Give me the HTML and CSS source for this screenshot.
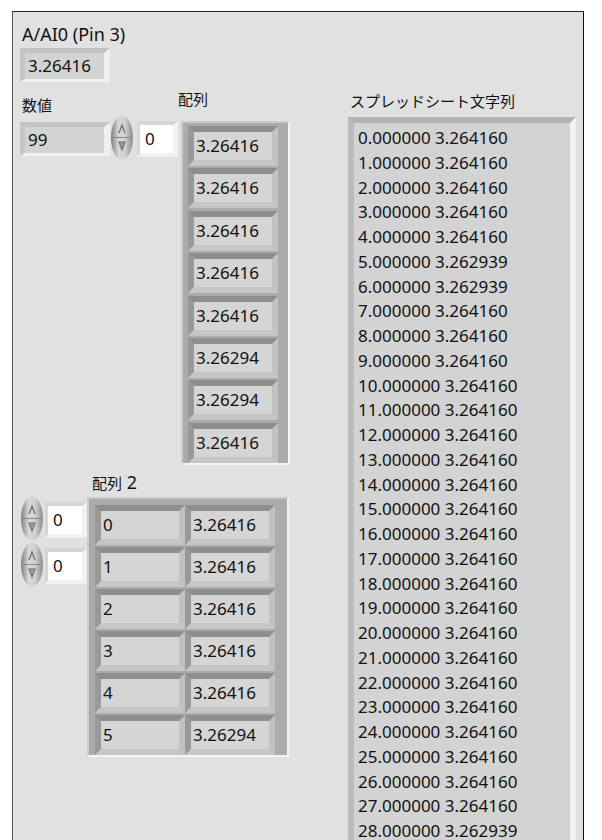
FILE: index.html
```html
<!DOCTYPE html>
<html>
<head>
<meta charset="utf-8">
<link rel="stylesheet" href="styles.css">
</head>
<body>
<div class="panel">
  <div class="ctl ai0">
    <div class="lbl">A/AI0 (Pin 3)</div>
    <div class="num">3.26416</div>
  </div>

  <div class="ctl numv">
    <div class="lbl"><span class="cj">数値</span></div>
    <div class="num">99</div>
  </div>

  <div class="ctl arr1">
    <div class="lbl arr1-lbl"><span class="cj">配列</span></div>
    <div class="arr-body">
      <div class="idx-col">
        <div class="idx-row">
          <svg class="spin" width="24" height="45" viewBox="0 0 24 45"><defs><linearGradient id="sg" x1="0" x2="1" y1="0" y2="0"><stop offset="0" stop-color="#7f7f7f"/><stop offset="0.35" stop-color="#d9d9d9"/><stop offset="0.65" stop-color="#cfcfcf"/><stop offset="1" stop-color="#8c8c8c"/></linearGradient></defs><ellipse cx="12" cy="22.5" rx="11" ry="22" fill="url(#sg)"/><line x1="3" y1="22.5" x2="21" y2="22.5" stroke="#8a8a8a" stroke-width="1"/><path d="M9 18 L12 10 L15 18" fill="none" stroke="#6f6f6f" stroke-width="1.3"/><path d="M9 27 L12 35 L15 27 Z" fill="#a0a0a0" stroke="#6f6f6f" stroke-width="1.1"/></svg>
          <div class="idx">0</div>
        </div>
      </div>
      <div class="frame f1">
        <div class="cell">3.26416</div>
        <div class="cell">3.26416</div>
        <div class="cell">3.26416</div>
        <div class="cell">3.26416</div>
        <div class="cell">3.26416</div>
        <div class="cell">3.26294</div>
        <div class="cell">3.26294</div>
        <div class="cell">3.26416</div>
      </div>
    </div>
  </div>

  <div class="ctl arr2">
    <div class="lbl arr2-lbl"><span class="cj">配列</span> 2</div>
    <div class="arr-body">
      <div class="idx-col">
        <div class="idx-row">
          <svg class="spin" width="24" height="45" viewBox="0 0 24 45"><defs><linearGradient id="sg2" x1="0" x2="1" y1="0" y2="0"><stop offset="0" stop-color="#7f7f7f"/><stop offset="0.35" stop-color="#d9d9d9"/><stop offset="0.65" stop-color="#cfcfcf"/><stop offset="1" stop-color="#8c8c8c"/></linearGradient></defs><ellipse cx="12" cy="22.5" rx="11" ry="22" fill="url(#sg2)"/><line x1="3" y1="22.5" x2="21" y2="22.5" stroke="#8a8a8a" stroke-width="1"/><path d="M9 18 L12 10 L15 18" fill="none" stroke="#6f6f6f" stroke-width="1.3"/><path d="M9 27 L12 35 L15 27 Z" fill="#a0a0a0" stroke="#6f6f6f" stroke-width="1.1"/></svg>
          <div class="idx">0</div>
        </div>
        <div class="idx-row">
          <svg class="spin" width="24" height="45" viewBox="0 0 24 45"><defs><linearGradient id="sg3" x1="0" x2="1" y1="0" y2="0"><stop offset="0" stop-color="#7f7f7f"/><stop offset="0.35" stop-color="#d9d9d9"/><stop offset="0.65" stop-color="#cfcfcf"/><stop offset="1" stop-color="#8c8c8c"/></linearGradient></defs><ellipse cx="12" cy="22.5" rx="11" ry="22" fill="url(#sg3)"/><line x1="3" y1="22.5" x2="21" y2="22.5" stroke="#8a8a8a" stroke-width="1"/><path d="M9 18 L12 10 L15 18" fill="none" stroke="#6f6f6f" stroke-width="1.3"/><path d="M9 27 L12 35 L15 27 Z" fill="#a0a0a0" stroke="#6f6f6f" stroke-width="1.1"/></svg>
          <div class="idx">0</div>
        </div>
      </div>
      <div class="frame f2">
        <div class="cell">0</div><div class="cell">3.26416</div>
        <div class="cell">1</div><div class="cell">3.26416</div>
        <div class="cell">2</div><div class="cell">3.26416</div>
        <div class="cell">3</div><div class="cell">3.26416</div>
        <div class="cell">4</div><div class="cell">3.26416</div>
        <div class="cell">5</div><div class="cell">3.26294</div>
      </div>
    </div>
  </div>

  <div class="ctl str">
    <div class="lbl"><span class="cj">スプレッドシート文字列</span></div>
    <div class="strbox">
      <div>0.000000 3.264160</div>
      <div>1.000000 3.264160</div>
      <div>2.000000 3.264160</div>
      <div>3.000000 3.264160</div>
      <div>4.000000 3.264160</div>
      <div>5.000000 3.262939</div>
      <div>6.000000 3.262939</div>
      <div>7.000000 3.264160</div>
      <div>8.000000 3.264160</div>
      <div>9.000000 3.264160</div>
      <div>10.000000 3.264160</div>
      <div>11.000000 3.264160</div>
      <div>12.000000 3.264160</div>
      <div>13.000000 3.264160</div>
      <div>14.000000 3.264160</div>
      <div>15.000000 3.264160</div>
      <div>16.000000 3.264160</div>
      <div>17.000000 3.264160</div>
      <div>18.000000 3.264160</div>
      <div>19.000000 3.264160</div>
      <div>20.000000 3.264160</div>
      <div>21.000000 3.264160</div>
      <div>22.000000 3.264160</div>
      <div>23.000000 3.264160</div>
      <div>24.000000 3.264160</div>
      <div>25.000000 3.264160</div>
      <div>26.000000 3.264160</div>
      <div>27.000000 3.264160</div>
      <div>28.000000 3.262939</div>
    </div>
  </div>
</div>
</body>
</html>
```

FILE: styles.css
```css
html, body {
  margin: 0;
  padding: 0;
  background: #ffffff;
  overflow: hidden;
  height: 840px;
}
body {
  font-family: "Noto Sans", "Noto Sans CJK JP", sans-serif;
  font-size: 17px;
  color: #111;
}
.panel {
  position: relative;
  margin: 11px 0 0 12px;
  width: 570px;
  height: 900px;
  background: #e1e1e1;
  border-top: 1px solid #222;
  border-right: 1px solid #111;
  border-left: 1px solid #555;
}
.ctl { position: absolute; }
.lbl {
  font-size: 18px;
  line-height: 20px;
  height: 20px;
  white-space: nowrap;
}
.cj {
  font-family: "Noto Sans CJK JP", sans-serif;
  font-size: 15px;
}
.ai0 { left: 7px; top: 12px; }
.ai0 .lbl { margin-left: 2px; margin-bottom: 4px; }
.numv { left: 7px; top: 82px; }
.numv .lbl { margin-left: 2px; margin-bottom: 8px; }

.num {
  box-sizing: border-box;
  width: 90px;
  height: 34px;
  border-style: solid;
  border-width: 5px 6px 3px 5px;
  border-color: #c3c3c3 #efefef #f1f1f1 #c6c6c6;
  background: #d3d3d3;
  line-height: 26px;
  padding-left: 3px;
}

.arr-body {
  display: flex;
  align-items: flex-start;
}
.idx-col {
  display: flex;
  flex-direction: column;
  gap: 1px;
}
.idx-row {
  display: flex;
  align-items: flex-start;
  gap: 3px;
}
.spin { display: block; flex: none; }
.idx {
  box-sizing: border-box;
  width: 41px;
  height: 36px;
  margin-top: 6px;
  border-style: solid;
  border-width: 4px 5px 4px 3px;
  border-color: #d6d6d6 #f1f1f1 #f1f1f1 #d6d6d6;
  background: #ffffff;
  line-height: 28px;
  padding-left: 5px;
}

.frame {
  box-sizing: border-box;
  background: #ababab;
  border-style: solid;
  border-width: 2px;
  border-color: #c9c9c9 #f4f4f4 #f4f4f4 #cdcdcd;
  display: grid;
  row-gap: 2px;
}
.cell {
  box-sizing: border-box;
  width: 90px;
  height: 40px;
  border-style: solid;
  border-width: 6px;
  border-color: #8e8e8e #c2c2c2 #c6c6c6 #999999;
  background: #d5d5d5;
  line-height: 28px;
  padding-left: 2px;
  white-space: nowrap;
}

.arr1 { left: 97px; top: 76px; }
.arr1-lbl { margin-left: 68px; margin-bottom: 13px; }
.arr1 .idx-col { margin-top: -6px; }
.arr1 .frame { margin-left: 3px; width: 109px; height: 344px; padding: 3px 10px 0 5px; }

.arr2 { left: 7px; top: 460px; }
.arr2-lbl { margin-left: 72px; margin-bottom: 5px; }
.arr2 .idx-col { margin-top: -1px; }
.arr2 .idx-row { gap: 1px; }
.arr2 .idx { width: 42px; }
.arr2 .frame {
  margin-left: 0;
  width: 202px;
  padding: 6px 12px 0 6px;
  grid-template-columns: 90px 90px;
}

.str { left: 335px; top: 78px; }
.str .lbl { margin-left: 2px; margin-bottom: 7px; }
.strbox {
  box-sizing: border-box;
  width: 228px;
  height: 760px;
  border-style: solid;
  border-width: 6px 6px 0 6px;
  border-color: #b2b2b2 #f2f2f2 #f2f2f2 #bcbcbc;
  background: #d3d3d3;
  padding: 3px 0 0 4px;
  line-height: 24.75px;
  white-space: nowrap;
  overflow: hidden;
}
```
